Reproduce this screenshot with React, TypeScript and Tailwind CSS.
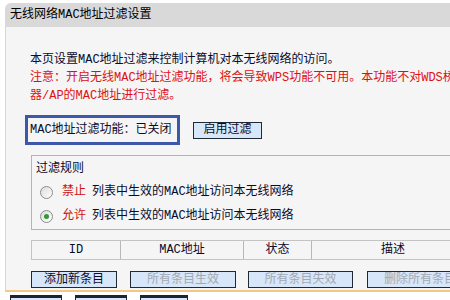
import React from 'react';

const font = 'font-["Liberation_Mono","Noto_Sans_CJK_SC",monospace]';

const Radio: React.FC<{ checked?: boolean }> = ({ checked }) => (
  <span className="w-[13px] h-[13px] rounded-full border border-[#8c8c8c] bg-gradient-to-br from-[#dcdcdc] to-white flex items-center justify-center">
    {checked && <span className="w-[5px] h-[5px] rounded-full bg-[#2f9a2f]" />}
  </span>
);

const Button: React.FC<{ label: string; width: string; disabled?: boolean }> = ({ label, width, disabled }) => (
  <div
    className={`${width} h-[17px] border border-[#1f2a36] bg-[#d7e6f8] flex items-center justify-center text-[12px] leading-none ${
      disabled ? 'text-[#a3a9b2]' : 'text-[#0a0a2a]'
    }`}
  >
    {label}
  </div>
);

export default function App() {
  return (
    <div className={`w-[450px] h-[300px] overflow-hidden bg-white ${font}`}>
      <div className="ml-[5px] mt-[3px] w-[520px]">
        {/* title bar */}
        <div className="h-[24px] bg-[#d9d9d9] rounded-tl-[6px] pl-[5px] flex items-center text-[12px] text-black">
          无线网络MAC地址过滤设置
        </div>

        {/* content */}
        <div className="h-[265px] bg-[#f5f5f5] border-l border-[#efd3a4] border-b-2 border-b-[#f0c987] pl-[19px] pt-[24px] text-[12px] text-[#0a0a2a]">
          <div className="pl-[5px] leading-[18px] whitespace-nowrap">
            <div>本页设置MAC地址过滤来控制计算机对本无线网络的访问。</div>
            <div className="text-[#dd1111]">注意：开启无线MAC地址过滤功能，将会导致WPS功能不可用。本功能不对WDS桥接路由</div>
            <div className="text-[#dd1111]">器/AP的MAC地址进行过滤。</div>
          </div>

          <div className="mt-[10px] flex items-center">
            <div className="w-[155px] h-[30px] border-[3px] border-[#3d58a8] pl-[2px] flex items-center whitespace-nowrap">
              MAC地址过滤功能：已关闭
            </div>
            <div className="ml-[13px]">
              <Button label="启用过滤" width="w-[69px]" />
            </div>
          </div>

          {/* filter rules */}
          <div className="mt-[10px] ml-[6px] border border-[#b4b4b4] pb-[1px]">
            <div className="mt-[4px] h-[18px] leading-[18px] pl-[4px]">过滤规则</div>
            <div className="mt-[2px] h-[24px] flex items-center pl-[8px]">
              <Radio />
              <span className="ml-[9px] text-[#cc1111]">禁止</span>
              <span className="ml-[6px]">列表中生效的MAC地址访问本无线网络</span>
            </div>
            <div className="h-[24px] flex items-center pl-[8px]">
              <Radio checked />
              <span className="ml-[9px] text-[#cc1111]">允许</span>
              <span className="ml-[6px]">列表中生效的MAC地址访问本无线网络</span>
            </div>
          </div>

          {/* table header */}
          <div className="mt-[10px] ml-[6px] h-[20px] flex border-y border-l border-[#c4c4c4]">
            <div className="w-[89px] flex items-center justify-center border-r border-[#b8b8b8]">ID</div>
            <div className="w-[123px] flex items-center justify-center border-r border-[#b8b8b8]">MAC地址</div>
            <div className="w-[68px] flex items-center justify-center border-r border-[#b8b8b8]">状态</div>
            <div className="w-[162px] flex items-center justify-center">描述</div>
          </div>

          {/* actions */}
          <div className="mt-[11px] ml-[6px] flex">
            <Button label="添加新条目" width="w-[86px]" />
            <div className="ml-[13px]">
              <Button label="所有条目生效" width="w-[106px]" disabled />
            </div>
            <div className="ml-[12px]">
              <Button label="所有条目失效" width="w-[105px]" disabled />
            </div>
            <div className="ml-[14px]">
              <Button label="删除所有条目" width="w-[106px]" disabled />
            </div>
          </div>
        </div>
      </div>

      {/* next section, cut off */}
      <div className="mt-[3px] flex pl-[10px] gap-[13px]">
        <div className="w-[52px] h-[8px] border-t-[3px] border-x border-[#1a2433] bg-[#d7e6f8]" />
        <div className="w-[52px] h-[8px] border-t-[3px] border-x border-[#1a2433] bg-[#d7e6f8]" />
        <div className="w-[48px] h-[8px] border-t-[3px] border-x border-[#1a2433] bg-[#d7e6f8]" />
      </div>
    </div>
  );
}
